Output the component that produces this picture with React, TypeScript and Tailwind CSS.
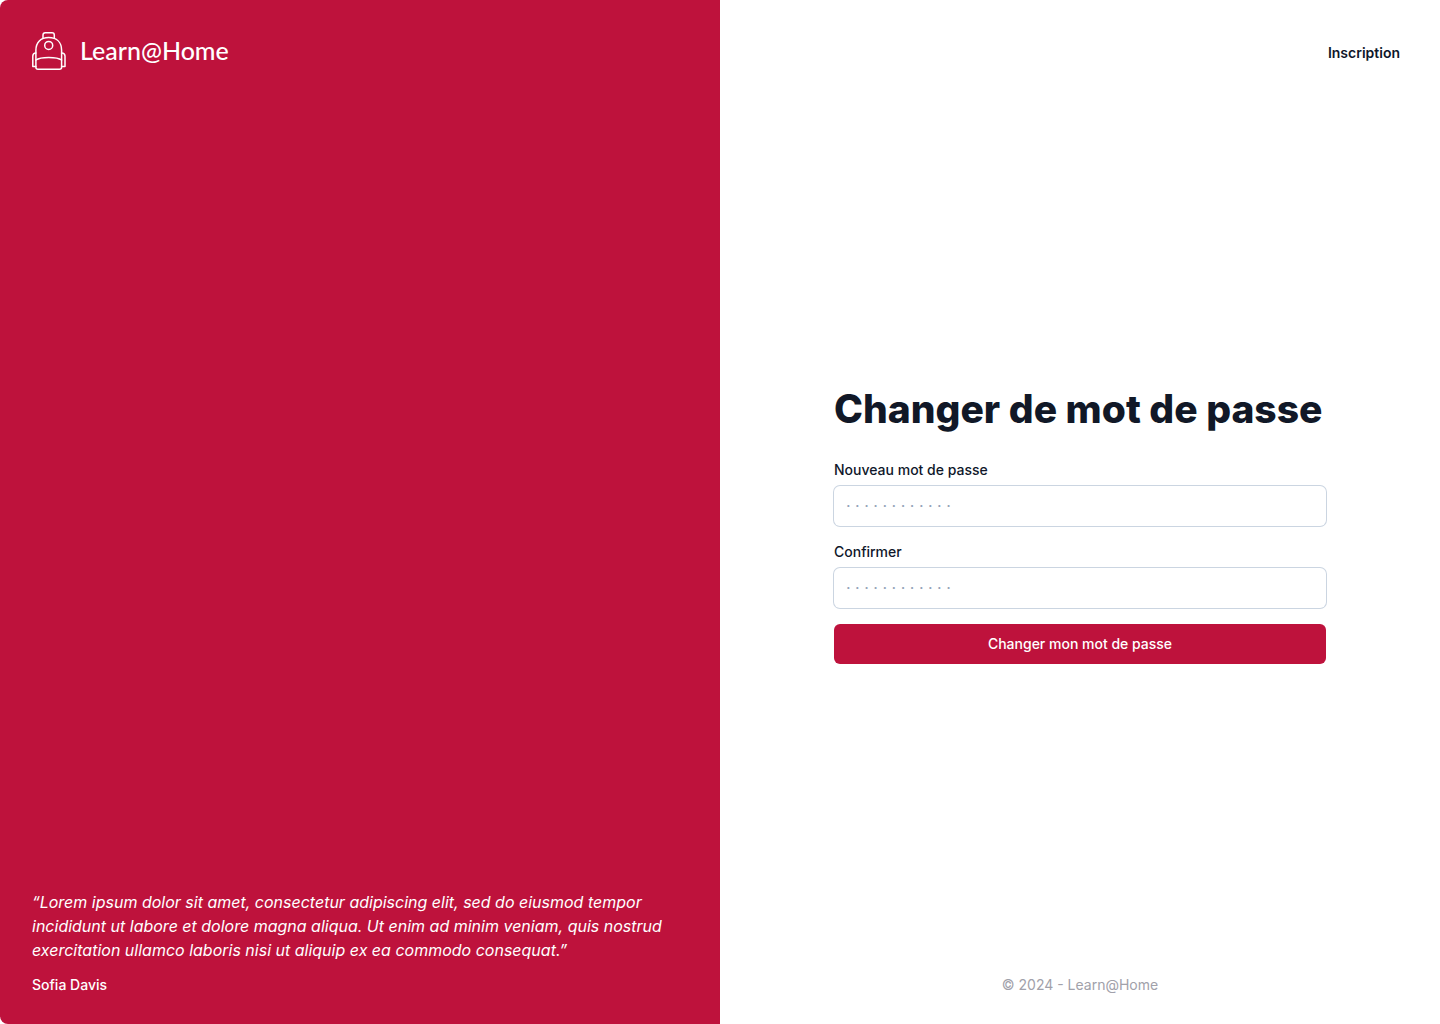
import React from "react";

function Backpack() {
  return (
    <svg
      className="h-[38px] w-[34px] shrink-0"
      viewBox="0 0 34 38"
      fill="none"
      stroke="currentColor"
      strokeWidth="1.5"
      strokeLinecap="round"
      strokeLinejoin="round"
      aria-hidden="true"
    >
      <path d="M11 6V3Q11 .8 13.3 .8H20Q22.3 .8 22.3 3V6" />
      <path d="M3.9 35.2V18.3C3.9 10.3 8.7 5.6 16.7 5.6S29.6 10.3 29.6 18.3V35.2Q29.6 37.2 27.5 37.2H6Q3.9 37.2 3.9 35.2Z" />
      <circle cx="16.7" cy="13.4" r="4" />
      <path d="M3.9 28C8.5 24.5 25 24.5 29.6 28" />
      <path d="M3.9 20.9Q.9 20.9 .8 24V34.5H3.9" />
      <path d="M29.6 20.9Q32.9 20.9 33 24V34.5H29.6" />
    </svg>
  );
}

type FieldProps = { id: string; label: string };

function PasswordField({ id, label }: FieldProps) {
  return (
    <div className="flex flex-col gap-1.5">
      <label htmlFor={id} className="text-sm leading-5 font-medium">
        {label}
      </label>
      <input
        id={id}
        type="password"
        autoComplete="new-password"
        placeholder="· · · · · · · · · · · ·"
        className="h-10 w-full rounded-md bg-white px-3 text-base ring-1 ring-[#cbd5e1] outline-none placeholder:text-[#94a3b8] focus:ring-2"
      />
    </div>
  );
}

export default function App() {
  return (
    <div className="grid min-h-screen grid-cols-2 bg-white font-['Inter',sans-serif] text-[#0f172a]">
      <aside className="flex flex-col justify-between rounded-l-lg bg-[#be123c] p-8 text-white">
        <a href="#" className="flex items-start gap-3.5 self-start">
          <Backpack />
          <span className="font-['Lato',sans-serif] text-[25px] leading-9 font-medium">Learn@Home</span>
        </a>
        <figure className="flex flex-col gap-4">
          <blockquote className="text-base leading-6 italic">
            “Lorem ipsum dolor sit amet, consectetur adipiscing elit, sed do eiusmod tempor incididunt ut labore et
            dolore magna aliqua. Ut enim ad minim veniam, quis nostrud exercitation ullamco laboris nisi ut aliquip ex
            ea commodo consequat.”
          </blockquote>
          <figcaption className="text-sm leading-none font-medium">Sofia Davis</figcaption>
        </figure>
      </aside>
      <div className="flex flex-col px-10 py-8">
        <header className="flex h-[42px] items-center justify-end">
          <a href="#" className="text-sm font-semibold">
            Inscription
          </a>
        </header>
        <main className="flex flex-1 flex-col items-center justify-center">
          <form className="flex w-full max-w-[492px] flex-col gap-4" onSubmit={(e) => e.preventDefault()}>
            <h1 className="mb-3.5 text-[39px] leading-[42px] font-extrabold whitespace-nowrap text-[#111827]">
              Changer de mot de passe
            </h1>
            <PasswordField id="new-password" label="Nouveau mot de passe" />
            <PasswordField id="confirm-password" label="Confirmer" />
            <button type="submit" className="h-10 rounded-md bg-[#be123c] text-sm font-medium text-white">
              Changer mon mot de passe
            </button>
          </form>
        </main>
        <footer className="text-center text-sm leading-none text-[#a1a1aa]">© 2024 - Learn@Home</footer>
      </div>
    </div>
  );
}
